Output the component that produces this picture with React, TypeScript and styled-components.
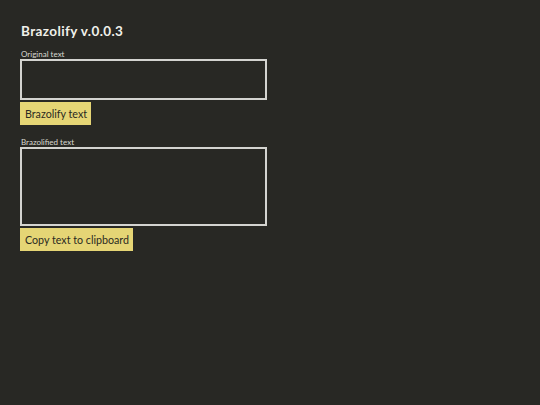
import React, { useState } from 'react';
import styled, { createGlobalStyle } from 'styled-components';

const GlobalStyle = createGlobalStyle`
  html, body {
    margin: 0;
    padding: 0;
    background: #282824;
    min-height: 100%;
  }
  body {
    font-family: Lato, "Open Sans", sans-serif;
    color: #e8e8e0;
  }
`;

const Page = styled.main`
  padding: 20px 20px;
  display: flex;
  flex-direction: column;
  align-items: flex-start;
`;

const Title = styled.h1`
  margin: 3px 0 11px 1px;
  font-size: 13.5px;
  font-weight: 700;
  letter-spacing: 0.4px;
  color: #f0f0ea;
`;

const Section = styled.section`
  display: flex;
  flex-direction: column;
  align-items: flex-start;
  margin-bottom: 13px;
`;

const Label = styled.label`
  font-size: 8px;
  line-height: 9px;
  margin-left: 1px;
  color: #d8d8d0;
`;

const TextBox = styled.textarea<{ rows: number }>`
  box-sizing: border-box;
  width: 247px;
  height: ${p => (p.rows > 2 ? 79 : 41)}px;
  margin: 0;
  background: transparent;
  border: 2px solid #d4d4d0;
  color: #f0f0ea;
  resize: none;
  outline: none;
  font-family: inherit;
  font-size: 11px;
`;

const Button = styled.button`
  margin-top: 2px;
  padding: 0 4px 0 5px;
  height: 23px;
  border: none;
  background: #e5d575;
  color: #2a2a22;
  font-family: Lato, "Open Sans", sans-serif;
  font-size: 10.7px;
  cursor: pointer;
`;

const App: React.FC = () => {
  const [original, setOriginal] = useState('');
  const [result, setResult] = useState('');

  return (
    <>
      <GlobalStyle />
      <Page>
        <Title>Brazolify v.0.0.3</Title>
        <Section>
          <Label>Original text</Label>
          <TextBox rows={2} value={original} onChange={e => setOriginal(e.target.value)} />
          <Button onClick={() => setResult(original)}>Brazolify text</Button>
        </Section>
        <Section>
          <Label>Brazolified text</Label>
          <TextBox rows={5} value={result} readOnly />
          <Button onClick={() => navigator.clipboard?.writeText(result)}>Copy text to clipboard</Button>
        </Section>
      </Page>
    </>
  );
};

export default App;
